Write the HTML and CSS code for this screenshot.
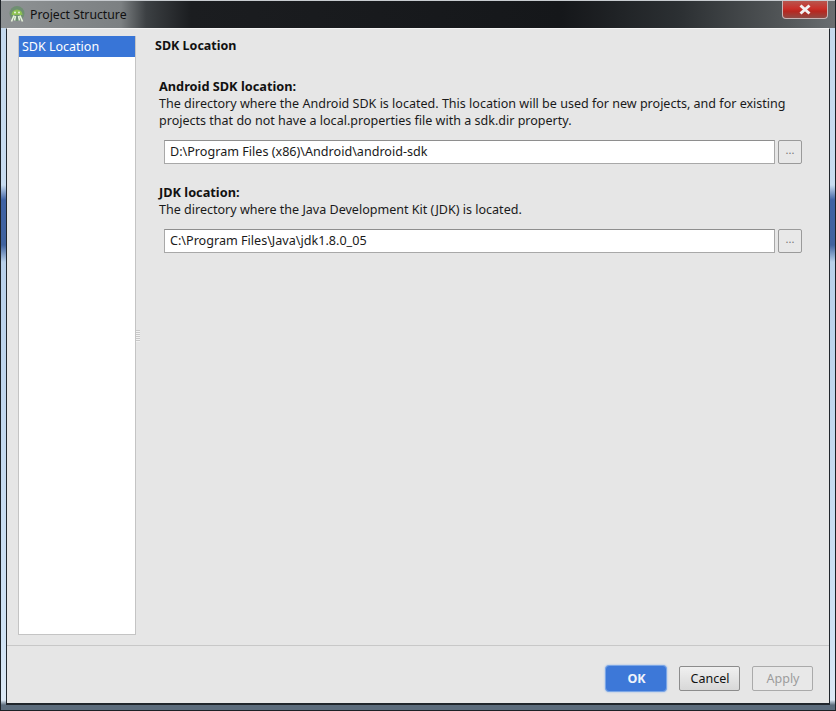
FILE: index.html
```html
<!DOCTYPE html>
<html lang="en">

<head>
    <meta charset="UTF-8">
    <meta name="viewport" content="width=device-width, initial-scale=1.0">
    <title>Project Structure</title>
    <link rel="stylesheet" href="styles.css">
</head>

<body>
    <div class="window">
        <!-- Title bar -->
        <div class="titlebar">
            <div class="title-glow">
                <svg class="app-icon" width="18" height="18" viewBox="0 0 18 18">
                    <circle cx="9" cy="8.5" r="7.5" fill="#6f8f72"/>
                    <path d="M3.5 10a5.5 5.5 0 0 1 11 0z" fill="#8cc152"/>
                    <path d="M6 10.5L3.5 16.5M12 10.5l2.5 6M7.5 11l-1 4.5M10.5 11l1 4.5" stroke="#e6f2da" stroke-width="1.6" fill="none"/>
                    <circle cx="7" cy="7.5" r="0.9" fill="#f4f8ee"/>
                    <circle cx="11" cy="7.5" r="0.9" fill="#f4f8ee"/>
                </svg>
                <span class="title-text">Project Structure</span>
            </div>
            <div class="close-btn">
                <svg width="14" height="11" viewBox="0 0 14 11">
                    <path d="M2.5 1.5l9 8M11.5 1.5l-9 8" stroke="#f2f2f2" stroke-width="3" fill="none"/>
                </svg>
            </div>
        </div>

        <div class="client">
            <div class="main">
                <!-- Left list -->
                <div class="sidebar">
                    <div class="sidebar-item">SDK Location</div>
                </div>
                <div class="splitter">
                    <div class="grip"></div>
                </div>

                <!-- Settings -->
                <div class="content">
                    <div class="page-title">SDK Location</div>

                    <div class="section section-first">
                        <div class="section-title">Android SDK location:</div>
                        <p class="section-desc">The directory where the Android SDK is located. This location will be used for new projects, and for existing projects that do not have a local.properties file with a sdk.dir property.</p>
                        <div class="path-row">
                            <div class="path-input">D:\Program Files (x86)\Android\android-sdk</div>
                            <div class="browse-btn">...</div>
                        </div>
                    </div>

                    <div class="section">
                        <div class="section-title">JDK location:</div>
                        <p class="section-desc">The directory where the Java Development Kit (JDK) is located.</p>
                        <div class="path-row">
                            <div class="path-input">C:\Program Files\Java\jdk1.8.0_05</div>
                            <div class="browse-btn">...</div>
                        </div>
                    </div>
                </div>
            </div>

            <!-- Bottom buttons -->
            <div class="footer">
                <div class="btn btn-ok">OK</div>
                <div class="btn">Cancel</div>
                <div class="btn btn-disabled">Apply</div>
            </div>
        </div>
    </div>
</body>

</html>
```

FILE: styles.css
```css
/* Page */
html,
body {
    margin: 0;
    padding: 0;
    height: 100%;
    overflow: hidden;
}

body {
    font-family: "Noto Sans", "Open Sans", sans-serif;
    font-size: 12px;
    color: #1a1a1a;
    background-color: #24282b;
}

/* Window frame: light blue glass down both sides */
.window {
    height: 711px;
    box-sizing: border-box;
    display: flex;
    flex-direction: column;
    padding: 0 5px 5px;
    border: 1px solid #1c2126;
    border-top: none;
    background: linear-gradient(180deg, #c4d8ec 0, #c8dcf0 185px, #3f62a4 200px, #41639f 245px, #b8d0ea 262px, #cfe2f4 640px, #dce9f5 700px, #5c6c7c 705px);
}

/* Title bar */
.titlebar {
    height: 28px;
    box-sizing: border-box;
    margin: 0 -5px;
    display: flex;
    justify-content: space-between;
    background: linear-gradient(90deg, #8e9294 0, #7c8082 120px, #3c4043 145px, #1b1d20 190px, #15171a 560px, #2c3033 680px, #55595b 790px, #6b6f72 836px);
    border-top: 1px solid #c8ccd0;
}

.title-glow {
    display: flex;
    align-items: center;
    gap: 4px;
    padding: 0 0 1px 7px;
}

.app-icon {
    flex-shrink: 0;
}

.title-text {
    font-size: 12.25px;
    color: #111;
}

.close-btn {
    width: 46px;
    height: 18px;
    margin-right: 7px;
    box-sizing: border-box;
    display: flex;
    justify-content: center;
    align-items: center;
    border: 1px solid #c9b5b5;
    border-top: none;
    border-radius: 0 0 4px 4px;
    background: linear-gradient(180deg, #b8564e 0, #c9302a 45%, #b8271f 60%, #8f4a44 100%);
}

/* Client area */
.client {
    flex: 1;
    display: flex;
    flex-direction: column;
    background-color: #e6e6e6;
    border: 1px solid #20262c;
    border-width: 1px 1px 2px;
    border-top-color: #f4f4f4;
}

.main {
    height: 617px;
    box-sizing: border-box;
    display: flex;
    padding: 7px 0 0 11px;
    border-bottom: 1px solid #c8c8c8;
}

/* Left list */
.sidebar {
    width: 118px;
    height: 599px;
    box-sizing: border-box;
    flex-shrink: 0;
    background-color: #fff;
    border: 1px solid #c4c4c4;
    border-top: none;
}

.sidebar-item {
    height: 21px;
    padding-left: 3px;
    line-height: 21px;
    font-size: 12.5px;
    color: #fff;
    background-color: #3875d7;
}

/* Splitter */
.splitter {
    width: 19px;
    flex-shrink: 0;
    display: flex;
    align-items: center;
    height: 599px;
}

.grip {
    width: 4px;
    height: 12px;
    background: repeating-linear-gradient(180deg, #c8c8c8 0, #c8c8c8 1px, #f2f2f2 1px, #f2f2f2 2px);
}

/* Settings */
.content {
    flex: 1;
    min-width: 0;
    padding-right: 27px;
}

.page-title {
    height: 20px;
    line-height: 19px;
    font-size: 12.5px;
    font-weight: 700;
    color: #111;
}

.section {
    padding-left: 4px;
    margin-top: 20px;
}

.section-first {
    margin-top: 22px;
}

.section-title {
    height: 17px;
    line-height: 17px;
    font-size: 12.75px;
    font-weight: 700;
    color: #111;
}

.section-desc {
    margin: 0;
    line-height: 17px;
    font-size: 12.54px;
}

.path-row {
    display: flex;
    gap: 3px;
    margin-top: 11px;
    padding-left: 5px;
}

.path-input {
    flex: 1;
    height: 24px;
    box-sizing: border-box;
    padding-left: 5px;
    line-height: 22px;
    font-size: 12.6px;
    background-color: #fff;
    border: 1px solid #a8a8a8;
    border-top-color: #8e8e8e;
}

.browse-btn {
    width: 24px;
    height: 24px;
    box-sizing: border-box;
    text-align: center;
    line-height: 18px;
    font-size: 11px;
    color: #777;
    background-color: #e8e8e8;
    border: 1px solid #9a9a9a;
    border-radius: 2px;
}

/* Bottom buttons */
.footer {
    flex: 1;
    display: flex;
    justify-content: flex-end;
    gap: 12px;
    padding: 20px 16px 0 0;
}

.btn {
    width: 61px;
    height: 25px;
    box-sizing: border-box;
    padding-left: 1px;
    text-align: center;
    line-height: 23px;
    font-size: 12.5px;
    color: #111;
    background: linear-gradient(180deg, #f0f0f0 0, #d8d8d8 100%);
    border: 1px solid #8c8c8c;
    border-radius: 2px;
}

.btn-ok {
    width: 62px;
    height: 27px;
    margin-top: -1px;
    line-height: 25px;
    font-weight: 700;
    color: #f0f4fb;
    background: #3d78d8;
    border: 1px solid #7ba6e6;
    border-radius: 4px;
    box-shadow: 0 0 2px #8eb4ea;
}

.btn-disabled {
    color: #9c9c9c;
    background: #e8e8e8;
    border-color: #aaa;
}
```
